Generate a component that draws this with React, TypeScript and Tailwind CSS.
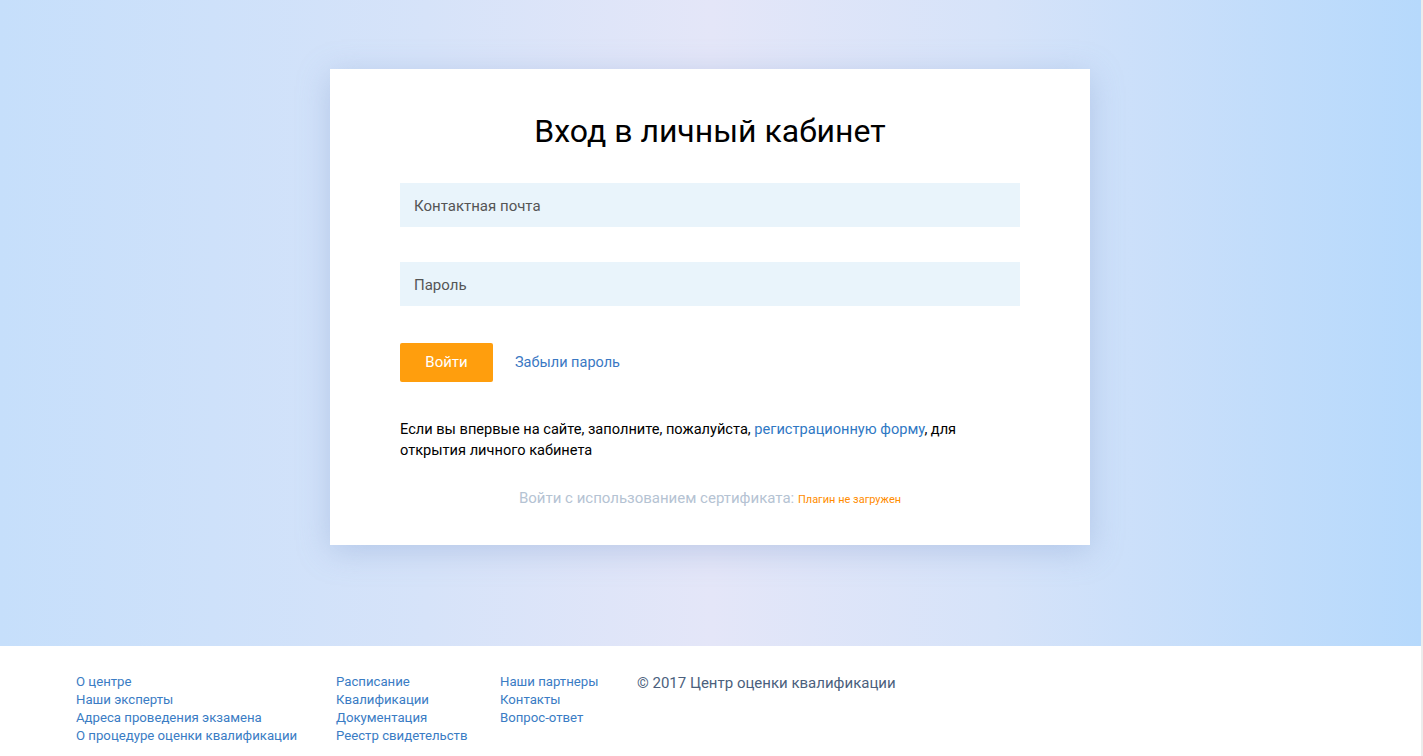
import React from 'react';

const footerCols = [
  ['О центре', 'Наши эксперты', 'Адреса проведения экзамена', 'О процедуре оценки квалификации'],
  ['Расписание', 'Квалификации', 'Документация', 'Реестр свидетельств'],
  ['Наши партнеры', 'Контакты', 'Вопрос-ответ'],
];

const App: React.FC = () => {
  return (
    <div className="flex min-h-[756px] w-full font-['Roboto',sans-serif]">
      <div className="flex-1 flex flex-col">
        {/* Login area */}
        <section className="h-[646px] pt-[69px] bg-[linear-gradient(90deg,#c6dffb_0%,#d6e3f9_30%,#e4e6f8_50%,#d6e3f9_70%,#b6d9fc_100%)]">
          <div className="ml-[330px] w-[760px] h-[476px] bg-white shadow-[0_6px_30px_rgba(120,150,200,0.35)] px-[70px] pt-[42px]">
            <h1 className="text-center text-[32px] leading-[40px] text-black">Вход в личный кабинет</h1>

            <form className="mt-[32px] flex flex-col" onSubmit={(e) => e.preventDefault()}>
              <input
                type="email"
                placeholder="Контактная почта"
                className="h-[44px] w-[620px] bg-[#e9f4fb] px-[14px] pt-[2px] text-[15px] text-[#333] placeholder:text-[#555] outline-none"
              />
              <input
                type="password"
                placeholder="Пароль"
                className="mt-[35px] h-[44px] w-[620px] bg-[#e9f4fb] px-[14px] pt-[2px] text-[15px] text-[#333] placeholder:text-[#555] outline-none"
              />

              <div className="mt-[37px] flex items-center gap-[22px]">
                <button
                  type="submit"
                  className="h-[39px] w-[93px] rounded-[2px] bg-[#ff9e0d] text-[15px] text-white"
                >
                  Войти
                </button>
                <a href="#" className="text-[14.5px] text-[#3a78c3]">Забыли пароль</a>
              </div>
            </form>

            <p className="mt-[37px] w-[580px] text-[14.6px] leading-[21px] text-black">
              Если вы впервые на сайте, заполните, пожалуйста,{' '}
              <a href="#" className="text-[#2f78c4]">регистрационную форму</a>, для открытия личного кабинета
            </p>

            <div className="mt-[26px] text-center text-[15px] text-[#b5c3d3]">
              Войти с использованием сертификата:{' '}
              <span className="text-[11px] text-[#ff8c00]">Плагин не загружен</span>
            </div>
          </div>
        </section>

        {/* Footer */}
        <footer className="flex-1 bg-white pt-[27px] pl-[76px] flex">
          {footerCols.map((col, i) => (
            <ul key={i} className={i === 0 ? 'w-[260px]' : i === 1 ? 'w-[164px]' : 'w-[137px]'}>
              {col.map((item) => (
                <li key={item} className="text-[13.2px] leading-[18px]">
                  <a href="#" className="text-[#3a7cc4]">{item}</a>
                </li>
              ))}
            </ul>
          ))}
          <div className="text-[15px] leading-[18px] text-[#4b5f7d] pt-[1px]">© 2017 Центр оценки квалификации</div>
        </footer>
      </div>
      <div className="w-[2px] bg-[#ececec]" />
    </div>
  );
};

export default App;
